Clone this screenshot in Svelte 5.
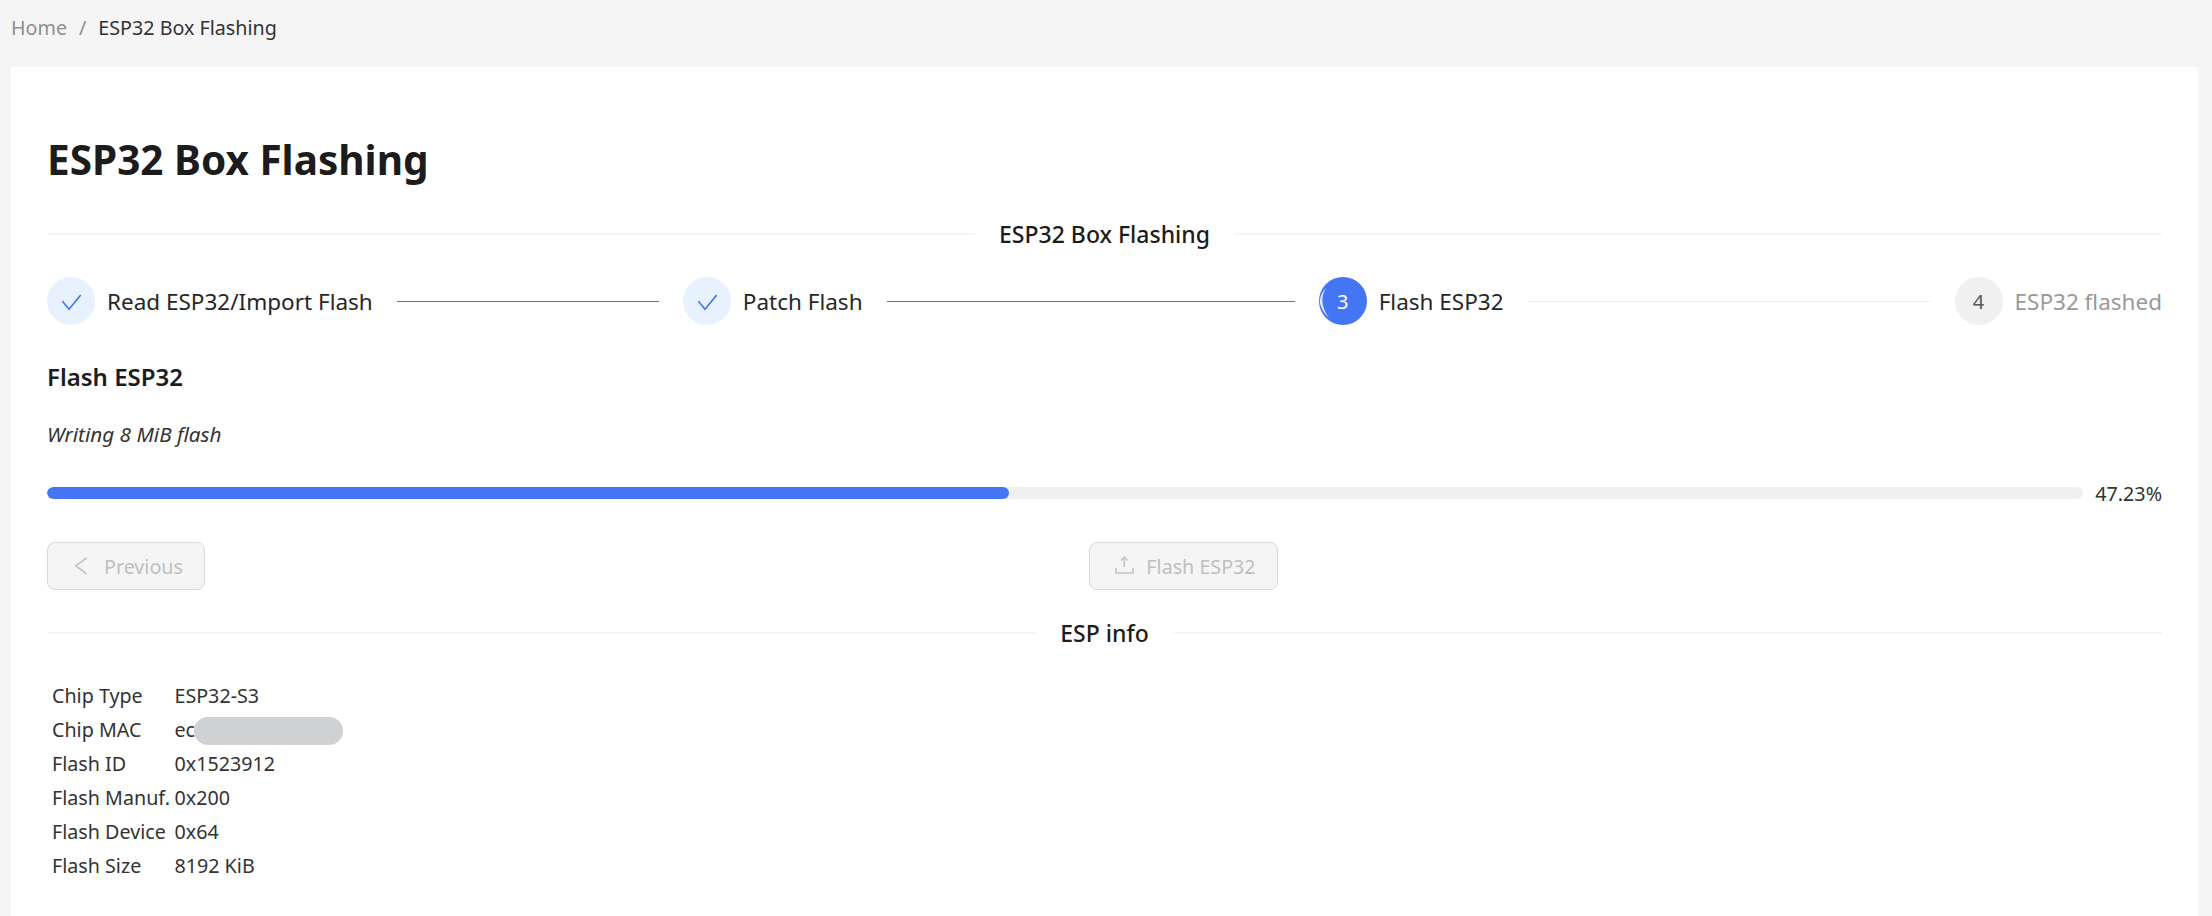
<script>
  const steps = [
    { label: 'Read ESP32/Import Flash', state: 'done' },
    { label: 'Patch Flash', state: 'done' },
    { label: 'Flash ESP32', state: 'active', n: 3 },
    { label: 'ESP32 flashed', state: 'todo', n: 4 }
  ];
  const info = [
    ['Chip Type', 'ESP32-S3'],
    ['Chip MAC', 'ec'],
    ['Flash ID', '0x1523912'],
    ['Flash Manuf.', '0x200'],
    ['Flash Device', '0x64'],
    ['Flash Size', '8192 KiB']
  ];
</script>

<div class="page">
  <nav class="crumbs">
    <span class="home">Home</span><span class="sep">/</span><span class="cur">ESP32 Box Flashing</span>
  </nav>
  <main class="card">
    <h1>ESP32 Box Flashing</h1>
    <div class="divider"><span>ESP32 Box Flashing</span></div>
    <div class="steps">
      {#each steps as s, i}
        <div class="step {s.state}" class:last={i === steps.length - 1}>
          <div class="dot">
            {#if s.state === 'done'}
              <svg width="20" height="20" viewBox="0 0 20 20" fill="none"><path d="M1.3 10 L8 18.3 L19.7 4" stroke="#4375f5" stroke-width="1.6"/></svg>
            {:else}
              {s.n}
            {/if}
            {#if s.state === 'active'}
              <svg class="spin" width="48" height="48" viewBox="0 0 48 48"><path d="M7 11 Q-6.5 25 10 41 Q-1.5 25 7 11 Z" fill="#dfe8ff"/></svg>
            {/if}
          </div>
          <span class="title">{s.label}</span>
          {#if i < steps.length - 1}<span class="line"></span>{/if}
        </div>
      {/each}
    </div>
    <h2>Flash ESP32</h2>
    <p class="note">Writing 8 MiB flash</p>
    <div class="progress">
      <div class="track"><div class="fill" style="width: 47.23%"></div></div>
      <span class="pct">47.23%</span>
    </div>
    <div class="actions">
      <button disabled>
        <svg width="20" height="20" viewBox="0 0 20 20" fill="none"><path d="M14.7 2 L3.7 9.7 L14.7 18" stroke="#c4c4c4" stroke-width="1.6"/></svg>
        Previous
      </button>
      <button disabled class="flash">
        <svg width="20" height="20" viewBox="0 0 20 20" fill="none"><path d="M10.3 11 V1.5 M7 4.5 L10.3 1.2 L13.6 4.5 M2 12 V17 H19 V12" stroke="#c4c4c4" stroke-width="1.6"/></svg>
        Flash ESP32
      </button>
      <span></span>
    </div>
    <div class="divider info"><span>ESP info</span></div>
    <table>
      <tbody>
        {#each info as row}
          <tr>
            <td class="k">{row[0]}</td>
            <td class="v">{row[1]}{#if row[0] === 'Chip MAC'}<span class="mask"></span>{/if}</td>
          </tr>
        {/each}
      </tbody>
    </table>
  </main>
</div>

<style>
  :global(body) {
    margin: 0;
    background: #f5f5f5;
    font-family: "Noto Sans", "Open Sans", sans-serif;
    color: #1f1f1f;
    overflow: hidden;
  }
  .page {
    height: 916px;
    padding: 0 14px 0 11px;
    box-sizing: border-box;
    overflow: hidden;
  }
  .crumbs {
    height: 67px;
    box-sizing: border-box;
    padding-top: 13px;
    font-size: 19.7px;
    line-height: 30px;
    color: #333;
  }
  .home { color: #8f8f8f; }
  .sep { color: #8f8f8f; margin: 0 12px; }
  .card {
    background: #fff;
    padding: 0 36px;
    height: 849px;
    box-sizing: border-box;
    overflow: hidden;
  }
  h1 {
    margin: 0;
    padding-top: 67px;
    font-size: 40.5px;
    line-height: 52px;
    font-weight: 700;
    color: #1c1c1c;
  }
  .divider {
    display: flex;
    align-items: center;
    gap: 24px;
    height: 30px;
    margin-top: 33px;
    font-size: 23px;
    font-weight: 500;
    color: #1c1c1c;
  }
  .divider::before, .divider::after {
    content: "";
    flex: 1;
    height: 2px;
    background: #f5f5f5;
  }
  .steps {
    display: flex;
    margin-top: 28px;
  }
  .step {
    flex: 1 1 0;
    display: flex;
    align-items: center;
    min-width: 0;
  }
  .step.last { flex: none; }
  .dot {
    position: relative;
    width: 48px;
    height: 48px;
    border-radius: 50%;
    display: flex;
    align-items: center;
    justify-content: center;
    font-size: 20px;
    flex: none;
  }
  .done .dot { background: #e8f2ff; }
  .active .dot { background: #4375f5; color: #fff; }
  .todo .dot { background: #f0f0f0; color: #595959; }
  .spin { position: absolute; left: 0; top: 0; overflow: visible; }
  .title {
    margin-left: 12px;
    font-size: 22.5px;
    white-space: nowrap;
    color: #262626;
  }
  .todo .title { color: #999; }
  .line {
    flex: 1;
    height: 1px;
    margin: 0 24px;
    background: #4375f5;
  }
  .active .line { background: #f0f0f0; }
  h2 {
    margin: 37px 0 0;
    font-size: 24px;
    line-height: 30px;
    font-weight: 600;
    color: #1c1c1c;
  }
  .note {
    margin: 27px 0 0;
    font-style: italic;
    font-size: 20.7px;
    line-height: 30px;
    color: #333;
  }
  .progress {
    display: flex;
    align-items: center;
    gap: 12px;
    margin-top: 29px;
    height: 30px;
  }
  .track {
    flex: 1;
    height: 12px;
    border-radius: 6px;
    background: #f0f0f0;
    overflow: hidden;
  }
  .fill { height: 100%; border-radius: 6px; background: #4375f5; }
  .pct { font-size: 19.7px; color: #333; white-space: nowrap; }
  .actions {
    display: flex;
    justify-content: space-between;
    margin-top: 34px;
  }
  button {
    height: 48px;
    box-sizing: border-box;
    display: flex;
    align-items: center;
    gap: 12px;
    padding: 0 21px 0 24px;
    border: 1px solid #d9d9d9;
    border-radius: 8px;
    background: #f5f5f5;
    color: #bfbfbf;
    font: inherit;
    font-size: 19.7px;
  }
  .divider.info { margin-top: 28px; }
  table {
    border-collapse: collapse;
    margin-top: 31px;
    font-size: 19.7px;
    color: #333;
  }
  td { height: 34px; padding: 0; line-height: 30px; white-space: nowrap; }
  .k { padding: 0 2px 0 5px; }
  .v { position: relative; padding-left: 2.5px; }
  .mask {
    position: absolute;
    left: 22px;
    top: 4px;
    width: 149px;
    height: 28px;
    border-radius: 14px;
    background: #d0d1d3;
  }
</style>
